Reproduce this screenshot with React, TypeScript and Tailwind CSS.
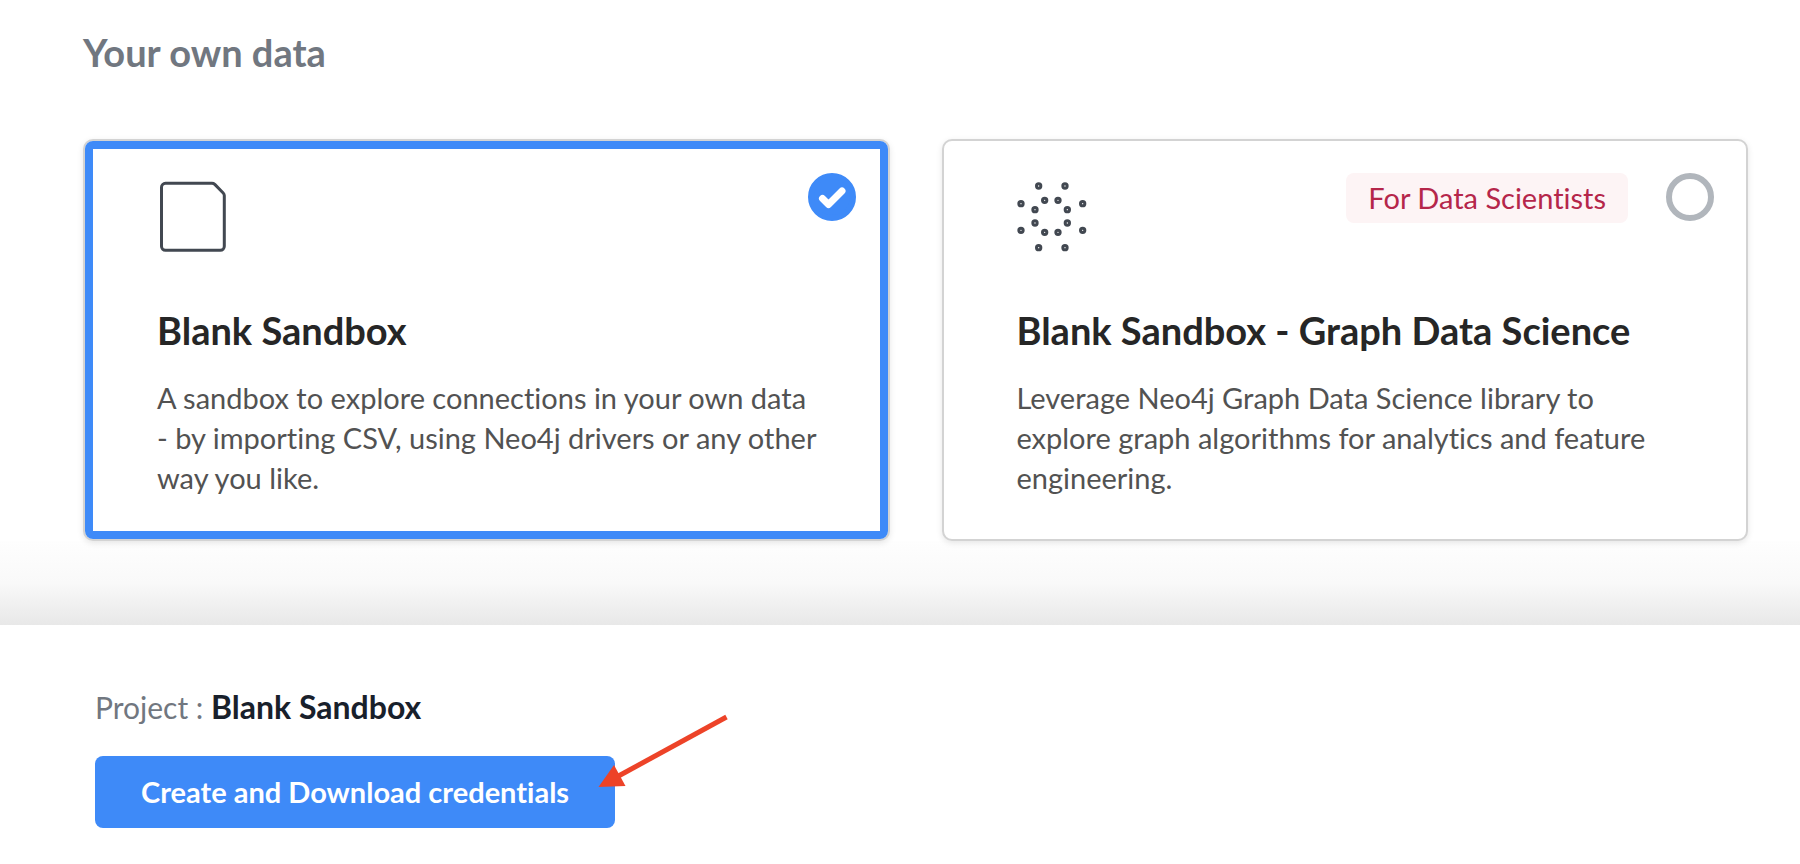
import { useState } from "react";

const outerDots = [[116, 78], [195, 78], [248, 131], [248, 211], [195, 263], [116, 263], [63, 211], [63, 131]];
const innerDots = [[134, 121], [174, 121], [202, 149], [202, 189], [174, 217], [134, 217], [105, 189], [105, 149]];

function FileIcon() {
  return (
    <svg className="size-18" viewBox="0 0 72 72" fill="none" stroke="#424851" strokeWidth="3" strokeLinejoin="round" aria-hidden="true">
      <path d="M55 3.300H8.500a4 4 0 0 0-4 4v59a4 4 0 0 0 4 4h54.800a4 4 0 0 0 4-4V15.600c0-1-.4-1.900-1.100-2.600L57.800 4.400C57 3.700 56 3.300 55 3.300Z" />
    </svg>
  );
}

function GraphIcon() {
  return (
    <svg className="size-18" viewBox="48 60 216 216" fill="none" stroke="#424851" strokeWidth="9" aria-hidden="true">
      {[...outerDots, ...innerDots].map(([x, y]) => (
        <circle key={`${x}-${y}`} cx={x} cy={y} r="6.500" />
      ))}
    </svg>
  );
}

type Project = { id: string; title: string; lines: string[]; tag?: string; icon: React.ReactNode };

const projects: Project[] = [
  {
    id: "blank",
    title: "Blank Sandbox",
    lines: ["A sandbox to explore connections in your own data", "- by importing CSV, using Neo4j drivers or any other", "way you like."],
    icon: <FileIcon />,
  },
  {
    id: "gds",
    title: "Blank Sandbox - Graph Data Science",
    lines: ["Leverage Neo4j Graph Data Science library to", "explore graph algorithms for analytics and feature", "engineering."],
    tag: "For Data Scientists",
    icon: <GraphIcon />,
  },
];

function ProjectCard({ project, selected, onSelect }: { project: Project; selected: boolean; onSelect: () => void }) {
  return (
    <label
      htmlFor={project.id}
      className="block flex-1 cursor-pointer rounded-[10px] border-2 border-[#d3d3d3] bg-white shadow-[0_2px_6px_rgba(0,0,0,0.1)]"
    >
      <div className={selected ? "h-full rounded-lg border-8 border-[#3e8af8]" : "h-full rounded-lg border-8 border-transparent"}>
        <div className="flex items-start pt-6 pr-6 pb-[54px] pl-16">
          <div className="mt-[7px] mr-auto">{project.icon}</div>
          {project.tag && (
            <span className="rounded-lg bg-[#fdf4f5] px-[22px] py-[5px] text-[29px] leading-10 text-[#b5264a]">{project.tag}</span>
          )}
          <span className="relative ml-[38px] block size-12">
            <input
              id={project.id}
              type="radio"
              name="project"
              checked={selected}
              onChange={onSelect}
              className="block size-12 appearance-none rounded-full border-[6px] border-[#b1b6bc] bg-white checked:border-[#3e8af8] checked:bg-[#3e8af8]"
            />
            {selected && (
              <svg className="pointer-events-none absolute inset-0 size-12" viewBox="0 0 48 48" fill="none" stroke="#fff" strokeWidth="7" strokeLinecap="round" strokeLinejoin="round" aria-hidden="true">
                <path d="M14.500 25.500L20.500 31.500L34 18" />
              </svg>
            )}
          </span>
        </div>
        <div className="px-16 pb-[33px]">
          <h3 className="text-[38px] leading-12 font-bold whitespace-nowrap text-[#262626]">{project.title}</h3>
          <p className="mt-6 text-[29px] leading-10 whitespace-nowrap text-[#525252]">
            {project.lines.map((line) => (
              <span key={line} className="block">{line}</span>
            ))}
          </p>
        </div>
      </div>
    </label>
  );
}

export default function App() {
  const [selected, setSelected] = useState("blank");
  const current = projects.find((p) => p.id === selected)!;
  return (
    <main className="min-h-screen bg-white font-['Lato',sans-serif] [font-variant-ligatures:none]">
      <section className="pt-7 pr-[52px] pl-[83px]">
        <h2 className="text-[38px] leading-12 font-bold text-[#717780]">Your own data</h2>
        <div className="mt-[63px] flex gap-[52px]">
          {projects.map((p) => (
            <ProjectCard key={p.id} project={p} selected={p.id === selected} onSelect={() => setSelected(p.id)} />
          ))}
        </div>
      </section>
      <div className="h-[84px] bg-linear-to-b from-[#fefefe] via-[#f9f9f9] to-[#e8e8e8]" />
      <footer className="px-[95px] pt-[62px] pb-9">
        <p className="text-3xl leading-10 text-[#717780]">
          Project : <strong className="text-[32px] font-bold text-[#18202b]">{current.title}</strong>
        </p>
        <div className="relative mt-[29px] w-fit">
          <button type="button" className="h-[72px] rounded-lg bg-[#3e8af8] px-[46px] text-[29px] font-bold text-white">
            Create and Download credentials
          </button>
          <svg className="pointer-events-none absolute -top-11 -right-31 h-20 w-36" viewBox="0 0 144 80" fill="#ed4328" aria-hidden="true">
            <path d="M131.500 5L18 67" stroke="#ed4328" strokeWidth="5" />
            <path d="M3.500 75L19 53L30.500 74Z" />
          </svg>
        </div>
      </footer>
    </main>
  );
}
